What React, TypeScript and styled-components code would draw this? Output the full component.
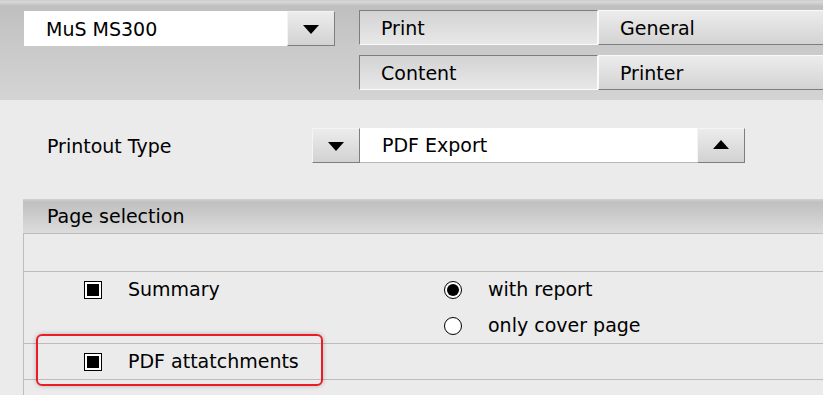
import React from "react";
import styled, { createGlobalStyle } from "styled-components";

const GlobalStyle = createGlobalStyle`
  html, body {
    margin: 0;
    padding: 0;
    background: #ebebeb;
    overflow: hidden;
  }
  body {
    font-family: "DejaVu Sans", Verdana, sans-serif;
    font-size: 19px;
    color: #000;
  }
`;

export default function App() {
  return (
    <>
      <GlobalStyle />
      <Page>
        <Header>
          <DeviceSelect>
            <SelectField>MuS MS300</SelectField>
            <ArrowButton>
              <Triangle $dir="down" />
            </ArrowButton>
          </DeviceSelect>
          <TabGrid>
            <Tab $pressed>Print</Tab>
            <Tab>General</Tab>
            <Tab $pressed>Content</Tab>
            <Tab>Printer</Tab>
          </TabGrid>
        </Header>

        <Body>
          <TypeRow>
            <FieldLabel>Printout Type</FieldLabel>
            <Spinner>
              <ArrowButton>
                <Triangle $dir="down" />
              </ArrowButton>
              <SpinnerValue>PDF Export</SpinnerValue>
              <ArrowButton>
                <Triangle $dir="up" />
              </ArrowButton>
            </Spinner>
          </TypeRow>

          <Section>
            <SectionHeader>Page selection</SectionHeader>
            <TableRow $height={37} />
            <TableRow>
              <CheckCell>
                <OptionLine>
                  <CheckBox $checked />
                  <OptionText>Summary</OptionText>
                </OptionLine>
              </CheckCell>
              <RadioCell>
                <OptionLine>
                  <Radio $checked />
                  <OptionText>with report</OptionText>
                </OptionLine>
                <OptionLine>
                  <Radio />
                  <OptionText>only cover page</OptionText>
                </OptionLine>
              </RadioCell>
            </TableRow>
            <TableRow>
              <CheckCell>
                <OptionLine>
                  <CheckBox $checked />
                  <OptionText>PDF attatchments</OptionText>
                </OptionLine>
              </CheckCell>
              <Highlight />
            </TableRow>
            <TableRow $height={40} />
          </Section>
        </Body>
      </Page>
    </>
  );
}

const Page = styled.div`
  width: 823px;
  height: 395px;
  overflow: hidden;
`;

const Header = styled.header`
  height: 100px;
  box-sizing: border-box;
  display: flex;
  align-items: flex-start;
  padding: 10px 0 0 24px;
  gap: 24px;
  background: linear-gradient(#cdcdcd 0, #d9d9d9 2px, #bfbfbf 6px, #c9c9c9 45%, #d4d4d4 100%);
`;

const DeviceSelect = styled.div`
  display: flex;
  margin-top: 1px;
  height: 35px;
`;

const SelectField = styled.div`
  width: 263px;
  box-sizing: border-box;
  background: #fff;
  padding-left: 22px;
  display: flex;
  align-items: center;
`;

const ArrowButton = styled.div`
  width: 48px;
  height: 35px;
  box-sizing: border-box;
  display: flex;
  align-items: center;
  justify-content: center;
  border-top: 1px solid #f4f4f4;
  border-left: 1px solid #f4f4f4;
  border-right: 1px solid #7e7e7e;
  border-bottom: 1px solid #7e7e7e;
  background: linear-gradient(#ececec, #d2d2d2);
`;

const Triangle = styled.span<{ $dir: "up" | "down" }>`
  width: 0;
  height: 0;
  border-left: 8.5px solid transparent;
  border-right: 8.5px solid transparent;
  ${({ $dir }) =>
    $dir === "down"
      ? "border-top: 9px solid #000; margin-top: 1px;"
      : "border-bottom: 9px solid #000; margin-top: -2px;"}
`;

const TabGrid = styled.div`
  display: grid;
  grid-template-columns: 239px 240px;
  grid-auto-rows: 35px;
  row-gap: 10px;
`;

const Tab = styled.div<{ $pressed?: boolean }>`
  box-sizing: border-box;
  display: flex;
  align-items: center;
  padding-left: 21px;
  border-style: solid;
  border-width: 1px;
  ${({ $pressed }) =>
    $pressed
      ? `border-color: #7e7e7e #fafafa #fafafa #7e7e7e;
         background: linear-gradient(#d3d3d3, #e8e8e8);`
      : `border-color: #fafafa #7e7e7e #7e7e7e #fafafa;
         background: linear-gradient(#ececec, #d3d3d3);`}
`;

const Body = styled.main`
  padding: 28px 0 0 23px;
`;

const TypeRow = styled.div`
  display: flex;
  align-items: center;
  height: 35px;
`;

const FieldLabel = styled.div`
  width: 289px;
  padding-left: 24px;
  box-sizing: border-box;
  flex-shrink: 0;
  white-space: nowrap;
`;

const Spinner = styled.div`
  display: flex;
  height: 35px;
`;

const SpinnerValue = styled.div`
  width: 337px;
  box-sizing: border-box;
  background: #fff;
  border-bottom: 1px solid #b8b8b8;
  padding-left: 22px;
  display: flex;
  align-items: center;
`;

const Section = styled.section`
  margin-top: 36px;
  width: 820px;
`;

const SectionHeader = styled.div`
  height: 35px;
  box-sizing: border-box;
  padding-left: 24px;
  display: flex;
  align-items: center;
  border-bottom: 1px solid #bcbcbc;
  background: linear-gradient(#d2d2d2 0, #c0c0c0 3px, #c6c6c6 30%, #dcdcdc 100%);
`;

const TableRow = styled.div<{ $height?: number }>`
  position: relative;
  display: flex;
  border-left: 1px solid #bcbcbc;
  border-bottom: 1px solid #bcbcbc;
  ${({ $height }) => ($height ? `height: ${$height}px;` : "")}
`;

const CheckCell = styled.div`
  width: 420px;
  padding-left: 60px;
  box-sizing: border-box;
`;

const RadioCell = styled.div`
  display: flex;
  flex-direction: column;
  gap: 1px;
`;

const OptionLine = styled.div`
  height: 35px;
  display: flex;
  align-items: center;
  gap: 26px;
  white-space: nowrap;
`;

const OptionText = styled.span`
  line-height: 1;
`;

const CheckBox = styled.span<{ $checked?: boolean }>`
  width: 18px;
  height: 18px;
  flex-shrink: 0;
  box-sizing: border-box;
  border: 1px solid #000;
  padding: 2px;
  background: #fff;
  display: flex;
  &::after {
    content: "";
    flex: 1;
    background: ${({ $checked }) => ($checked ? "#000" : "transparent")};
  }
`;

const Radio = styled.span<{ $checked?: boolean }>`
  width: 18px;
  height: 18px;
  flex-shrink: 0;
  box-sizing: border-box;
  border: 1px solid #000;
  border-radius: 50%;
  padding: 2px;
  background: #fff;
  display: flex;
  &::after {
    content: "";
    flex: 1;
    border-radius: 50%;
    background: ${({ $checked }) => ($checked ? "#000" : "transparent")};
  }
`;

const Highlight = styled.div`
  position: absolute;
  left: 12px;
  top: -10px;
  width: 287px;
  height: 52px;
  box-sizing: border-box;
  border: 2px solid #ec1c24;
  border-radius: 6px;
  box-shadow: 0 0 4px rgba(0, 0, 0, 0.25);
  pointer-events: none;
`;
